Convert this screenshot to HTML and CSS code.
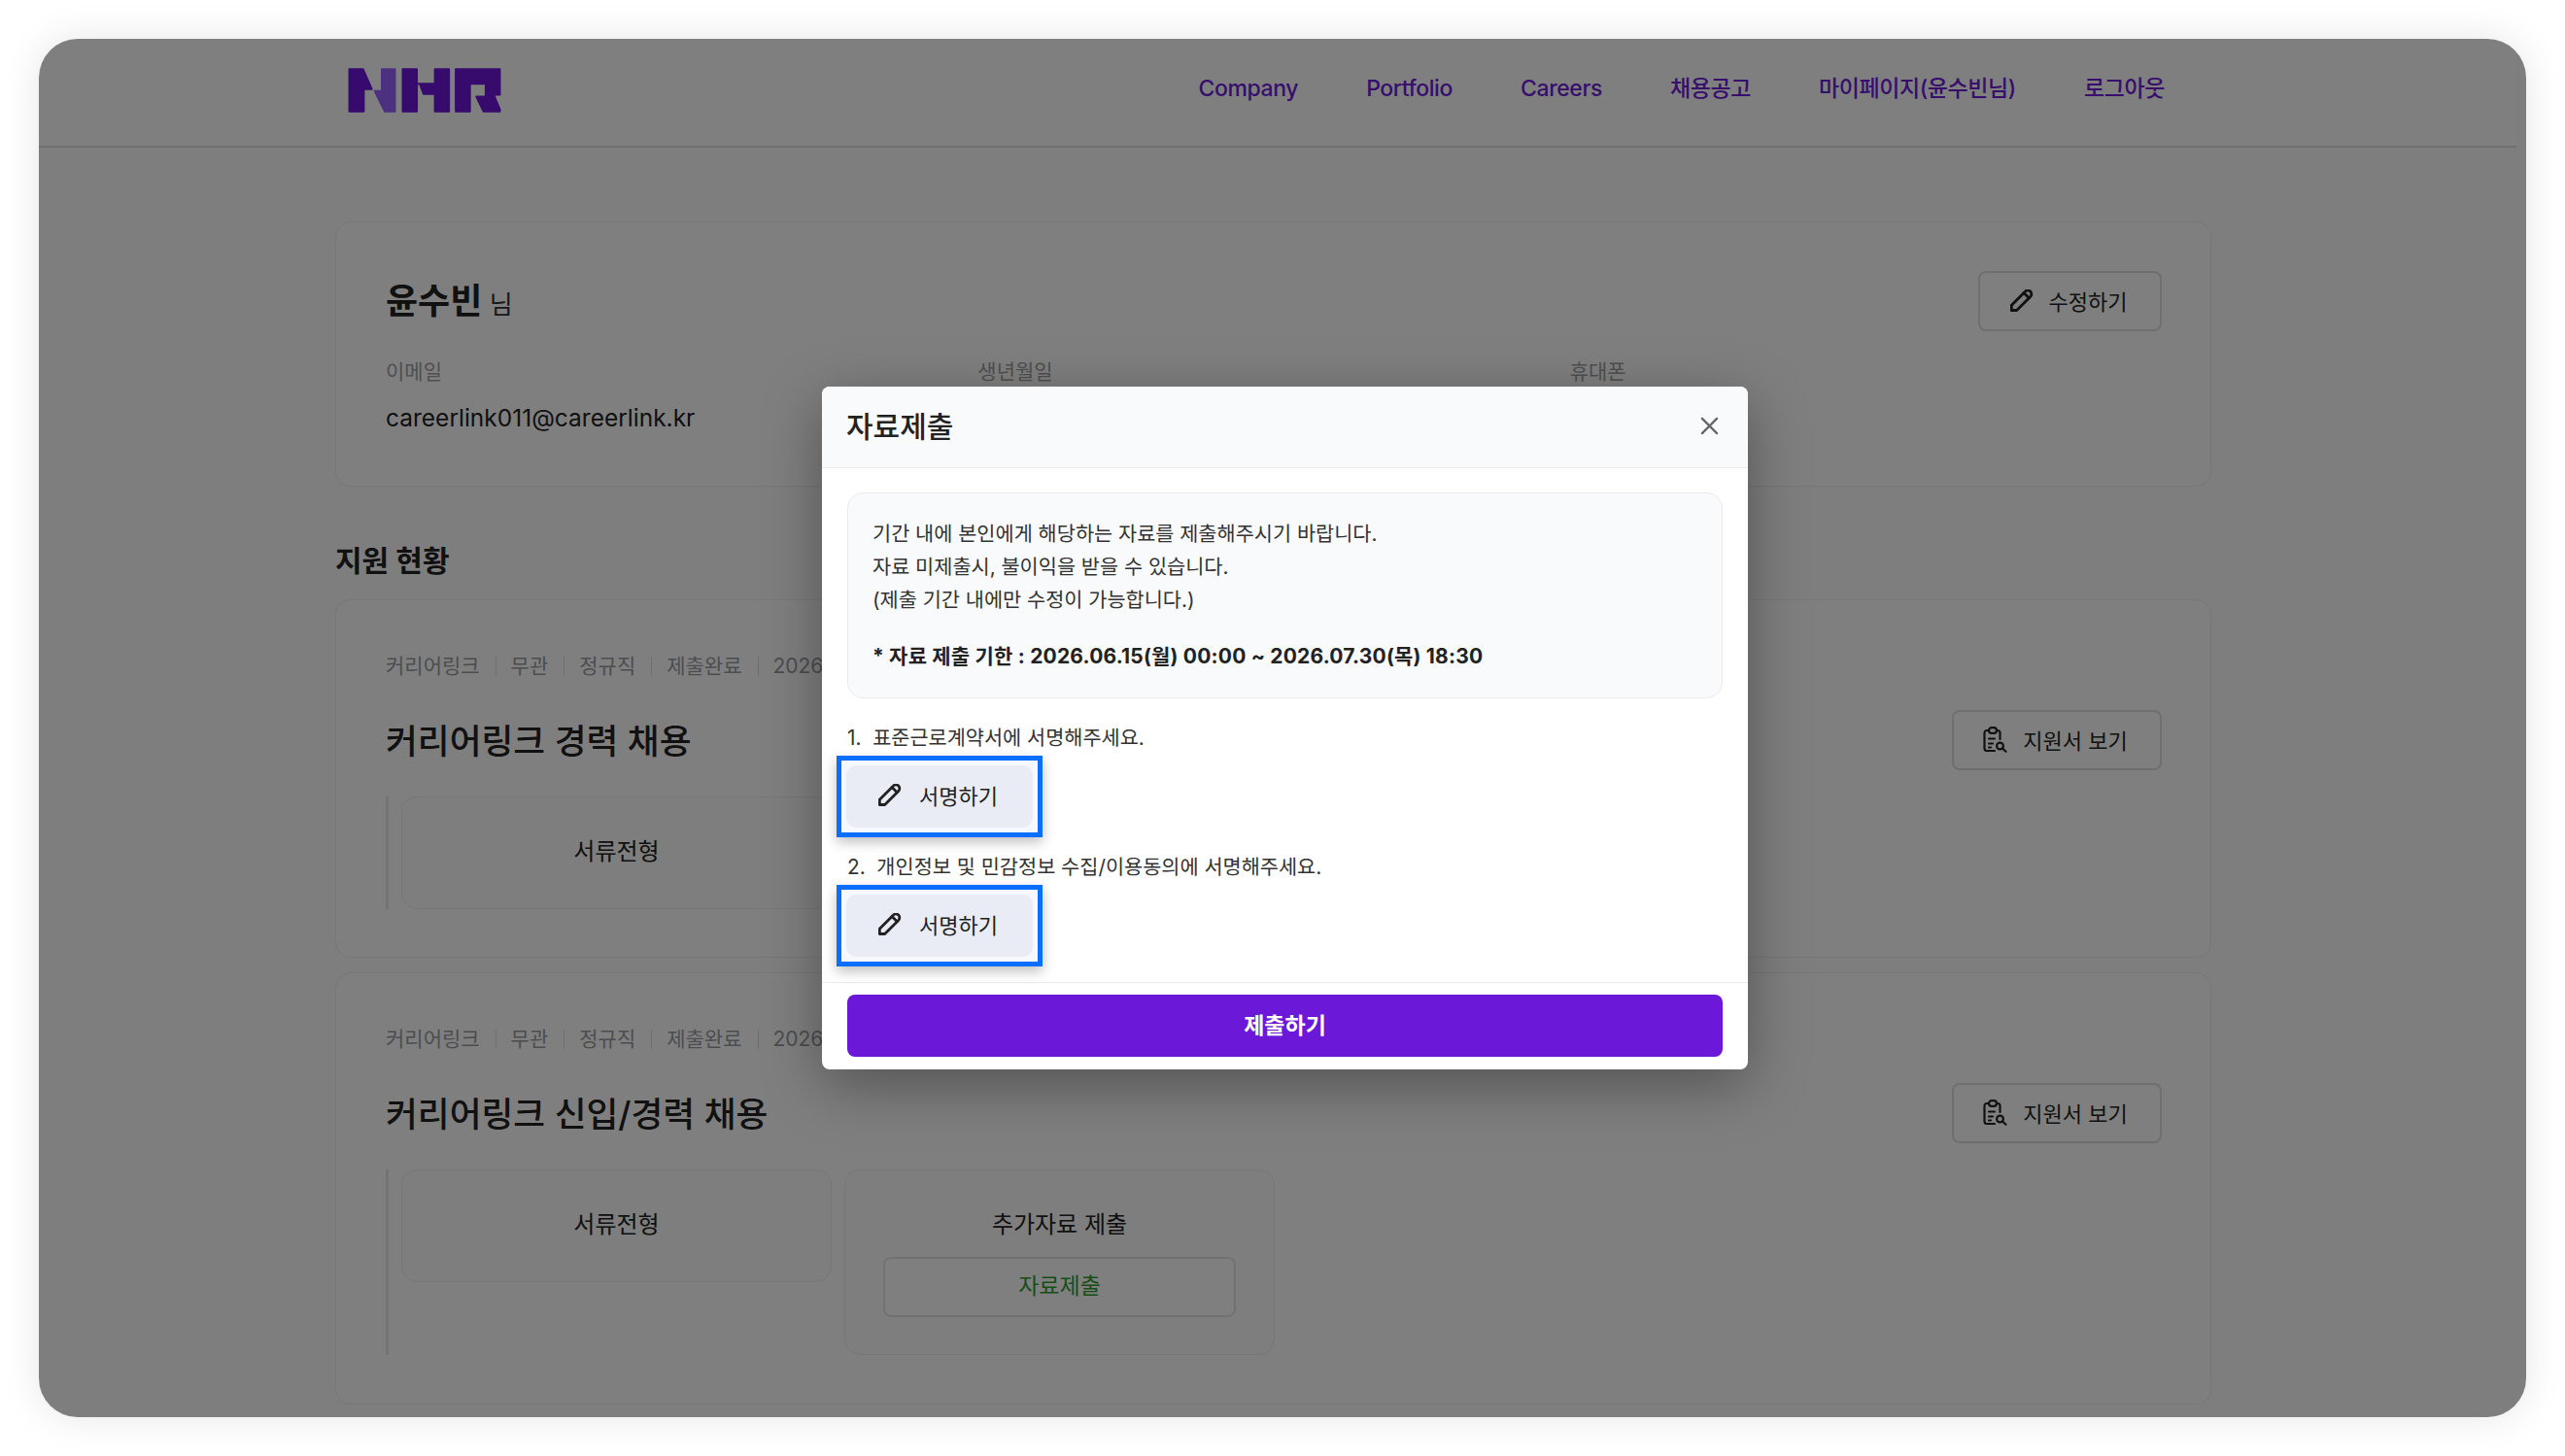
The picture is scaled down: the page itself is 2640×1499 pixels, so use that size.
FILE: index.html
```html
<!DOCTYPE html>
<html lang="ko">

<head>
    <meta charset="UTF-8">
    <meta name="viewport" content="width=device-width, initial-scale=1.0">
    <title>자료제출</title>
    <link rel="stylesheet" href="styles.css">
</head>

<body>
    <div class="frame">
        <!-- HEADER -->
        <header class="header">
            <svg class="logo" viewBox="50 56 482 145" aria-label="NHR">
                <path class="logo-dark" d="M57 63H100L127 125H102V194H57Z" />
                <path class="logo-light" d="M158 63H199V194H167L136 131H158Z" />
                <path class="logo-dark" d="M223 63H267V108H323V63H367V194H323V140H288L276 108H267V194H223Z" />
                <path class="logo-dark" d="M388 63H525V142H506L525 188V194H474L452 148H481V108H432V194H388Z" />
            </svg>
            <nav class="nav">
                <a>Company</a>
                <a>Portfolio</a>
                <a>Careers</a>
                <a>채용공고</a>
                <a>마이페이지(윤수빈님)</a>
                <a>로그아웃</a>
            </nav>
        </header>

        <main class="main">
            <!-- 내 정보 -->
            <section class="card profile">
                <div class="profile-head">
                    <div class="name"><strong>윤수빈</strong> <span>님</span></div>
                    <button class="btn">
                        <svg class="icon-pen"><use href="#pen" /></svg>
                        수정하기
                    </button>
                </div>
                <div class="profile-info">
                    <div>
                        <p class="label">이메일</p>
                        <p class="value">careerlink011@careerlink.kr</p>
                    </div>
                    <div>
                        <p class="label">생년월일</p>
                    </div>
                    <div>
                        <p class="label">휴대폰</p>
                    </div>
                </div>
            </section>

            <!-- 지원 현황 -->
            <h2 class="section-title">지원 현황</h2>

            <section class="card apply">
                <div class="meta">
                    <span>커리어링크</span><span>무관</span><span>정규직</span><span>제출완료</span><span>2026</span>
                </div>
                <div class="apply-head">
                    <h3>커리어링크 경력 채용</h3>
                    <button class="btn btn-view">
                        <svg class="icon-doc"><use href="#doc" /></svg>
                        지원서 보기
                    </button>
                </div>
                <div class="steps">
                    <div class="step">서류전형</div>
                </div>
            </section>

            <section class="card apply apply-last">
                <div class="meta">
                    <span>커리어링크</span><span>무관</span><span>정규직</span><span>제출완료</span><span>2026</span>
                </div>
                <div class="apply-head">
                    <h3>커리어링크 신입/경력 채용</h3>
                    <button class="btn btn-view">
                        <svg class="icon-doc"><use href="#doc" /></svg>
                        지원서 보기
                    </button>
                </div>
                <div class="steps">
                    <div class="step">서류전형</div>
                    <div class="step">
                        추가자료 제출
                        <button class="btn-upload">자료제출</button>
                    </div>
                </div>
            </section>
        </main>

        <!-- MODAL -->
        <div class="overlay">
            <div class="modal">
                <div class="modal-head">
                    <h4>자료제출</h4>
                    <svg class="icon-close" viewBox="0 0 20 20">
                        <path d="M2 2L18 18M18 2L2 18" />
                    </svg>
                </div>
                <div class="modal-body">
                    <div class="notice">
                        <p>기간 내에 본인에게 해당하는 자료를 제출해주시기 바랍니다.</p>
                        <p>자료 미제출시, 불이익을 받을 수 있습니다.</p>
                        <p>(제출 기간 내에만 수정이 가능합니다.)</p>
                        <p class="deadline">* 자료 제출 기한 : 2026.06.15(월) 00:00 ~ 2026.07.30(목) 18:30</p>
                    </div>
                    <p class="sign-text">1.&nbsp; 표준근로계약서에 서명해주세요.</p>
                    <div class="sign-ring">
                        <button class="btn-sign">
                            <svg class="icon-pen"><use href="#pen" /></svg>
                            서명하기
                        </button>
                    </div>
                    <p class="sign-text">2.&nbsp; 개인정보 및 민감정보 수집/이용동의에 서명해주세요.</p>
                    <div class="sign-ring">
                        <button class="btn-sign">
                            <svg class="icon-pen"><use href="#pen" /></svg>
                            서명하기
                        </button>
                    </div>
                </div>
                <div class="modal-foot">
                    <button class="btn-submit">제출하기</button>
                </div>
            </div>
        </div>
    </div>

    <!-- 아이콘 -->
    <svg class="sprite">
        <symbol id="pen" viewBox="3 4 18 17">
            <path d="M4 20h4L18.5 9.5a2.83 2.83 0 1 0-4-4L4 16v4" />
            <path d="M13.5 6.5l4 4" />
        </symbol>
        <symbol id="doc" viewBox="0 0 25 27">
            <path d="M6 4H4a2.5 2.5 0 0 0-2.5 2.5v16A2.5 2.5 0 0 0 4 25h8" />
            <path d="M14 4h1a2.5 2.5 0 0 1 2.5 2.5V13" />
            <rect x="6" y="1.2" width="8" height="5.6" rx="2.8" />
            <path d="M6 12.5h6M6 17.5h4M6 21.5h2" />
            <circle cx="17.5" cy="20" r="3.4" />
            <path d="M20 22.5l3.5 3.3" />
        </symbol>
    </svg>
</body>

</html>
```

FILE: styles.css
```css
* {
    box-sizing: border-box;
}

html,
body {
    margin: 0;
    height: 100%;
    background: #fff;
}

body {
    padding: 40px;
    font-family: Inter, "Noto Sans CJK KR", sans-serif;
    color: #222;
}

p,
h2,
h3,
h4 {
    margin: 0;
    font-weight: 400;
}

button {
    font-family: inherit;
}

.sprite {
    display: none;
}

.frame {
    position: relative;
    height: 1419px;
    overflow: hidden;
    border-radius: 40px;
    background: #fafcfa;
    box-shadow: 0 0 40px rgba(0, 0, 0, 0.1);
}

/* header */
.header {
    display: flex;
    align-items: center;
    height: 112px;
    margin-right: 10px;
    padding: 0 362px 0 318px;
    background: #fff;
    border-bottom: 2px solid #e2e2e2;
}

.logo {
    width: 160px;
    height: 48px;
    margin-top: -4px;
    margin-left: -1px;
}

.logo-dark,
.logo-light {
    stroke-width: 6px;
    stroke-linejoin: round;
}

.logo-dark {
    fill: #6e14dc;
    stroke: #6e14dc;
}

.logo-light {
    fill: #9662fe;
    stroke: #9662fe;
}

.nav {
    display: flex;
    gap: 70px;
    margin-left: auto;
    margin-top: -8px;
    font-size: 23px;
    line-height: 36px;
    font-weight: 500;
    letter-spacing: -0.4px;
    color: #6e1cd8;
}

/* main */
.main {
    width: 1931px;
    margin-left: 305px;
    padding-top: 76px;
}

.card {
    background: #fff;
    border: 1px solid #eceef0;
    border-radius: 16px;
    padding: 50px 50px 50px 51px;
}

.btn {
    display: flex;
    align-items: center;
    justify-content: center;
    gap: 16px;
    width: 189px;
    height: 62px;
    padding: 0 3px 2px 0;
    font-size: 22px;
    color: #222;
    background: #fff;
    border: 2px solid #dfdfdf;
    border-radius: 8px;
}

.btn-view {
    width: 216px;
}

.icon-pen {
    width: 24px;
    height: 23px;
    fill: none;
    stroke: currentColor;
    stroke-width: 2.1;
    stroke-linecap: round;
    stroke-linejoin: round;
}

.icon-doc {
    width: 25px;
    height: 27px;
    fill: none;
    stroke: currentColor;
    stroke-width: 2.2;
    stroke-linecap: round;
    stroke-linejoin: round;
}

/* profile */
.profile {
    height: 273px;
}

.profile-head {
    display: flex;
    align-items: center;
    justify-content: space-between;
    height: 62px;
}

.name {
    margin-top: -6px;
    font-size: 26px;
    color: #333;
}

.name strong {
    font-size: 36px;
    font-weight: 700;
    color: #222;
}

.profile-info {
    display: flex;
    margin-top: 27px;
}

.profile-info div {
    width: 610px;
}

.label {
    font-size: 21px;
    line-height: 30px;
    color: #a0a0a0;
}

.value {
    margin-top: 15px;
    font-size: 24.5px;
    line-height: 34px;
    color: #222;
}

.section-title {
    height: 40px;
    margin: 56px 0 20px;
    font-size: 30px;
    line-height: 40px;
    font-weight: 700;
}

/* apply cards */
.apply {
    height: 369px;
}

.apply-last {
    height: 445px;
    margin-top: 15px;
}

.meta {
    display: flex;
    align-items: center;
    height: 36px;
    font-size: 21px;
    line-height: 20px;
    color: #999ba0;
}

.meta span + span {
    margin-left: 16px;
    padding-left: 15px;
    border-left: 1px solid #dfdfe2;
}

.apply-head {
    display: flex;
    align-items: center;
    justify-content: space-between;
    height: 62px;
    margin: 27px 0;
}

.apply-head h3 {
    margin-top: -3px;
    font-size: 35.7px;
    font-weight: 500;
    color: #222;
}

.steps {
    display: flex;
    align-items: flex-start;
    gap: 13px;
    padding-left: 13px;
    border-left: 3px solid #e4e6ea;
}

.step {
    width: 443px;
    min-height: 116px;
    padding: 36px 39px 38px;
    font-size: 24px;
    line-height: 40px;
    text-align: center;
    color: #222;
    background: #fafcfa;
    border: 1px solid #eceef0;
    border-radius: 16px;
}

.btn-upload {
    display: block;
    width: 100%;
    height: 62px;
    margin-top: 13px;
    padding: 0 0 6px;
    font-size: 23px;
    color: #2f9b2f;
    background: #fff;
    border: 2px solid #e4e4e4;
    border-radius: 8px;
}

/* modal */
.overlay {
    position: absolute;
    inset: 0;
    display: flex;
    align-items: flex-start;
    padding: 358px 0 0 806px;
    background: rgba(0, 0, 0, 0.5);
}

.modal {
    width: 953px;
    background: #fff;
    border-radius: 8px;
    box-shadow: 0 16px 60px rgba(0, 0, 0, 0.35);
}

.modal-head {
    display: flex;
    align-items: center;
    justify-content: space-between;
    height: 84px;
    padding: 0 30px 2px 25px;
    background: #f9fafc;
    border-bottom: 1px solid #e9ebef;
    border-radius: 8px 8px 0 0;
}

.modal-head h4 {
    margin-top: -4px;
    font-size: 30px;
    font-weight: 500;
    color: #222;
}

.icon-close {
    width: 19px;
    height: 19px;
    fill: none;
    stroke: #666;
    stroke-width: 2.4;
    stroke-linecap: round;
}

.modal-body {
    padding: 25px 26px 26px;
    border-bottom: 1px solid #e9ebef;
}

.notice {
    padding: 25px;
    font-size: 20.8px;
    line-height: 34px;
    color: #333;
    background: #f9fafc;
    border: 1px solid #e9ebef;
    border-radius: 16px;
}

.deadline {
    margin-top: 24px;
    font-size: 21px;
    font-weight: 700;
    letter-spacing: 0.2px;
    color: #222;
}

.sign-text {
    margin-top: 24px;
    font-size: 20.8px;
    line-height: 34px;
    color: #333;
}

/* 서명 버튼 포커스 링 */
.sign-ring {
    width: 212px;
    margin: 1px 0 -10px -11px;
    padding: 5px;
    background: #f5f8ff;
    border: 5px solid #0a6eff;
    box-shadow: 0 5px 12px rgba(0, 0, 0, 0.25);
}

.btn-sign {
    display: flex;
    align-items: center;
    justify-content: center;
    gap: 18px;
    width: 100%;
    height: 64px;
    padding: 0 3px 4px 0;
    font-size: 22px;
    color: #222;
    background: #e9ecf5;
    border: 0;
    border-radius: 10px;
}

.modal-foot {
    padding: 12px 26px 13px;
}

.btn-submit {
    display: block;
    width: 100%;
    height: 64px;
    padding: 0 0 4px;
    font-size: 23px;
    font-weight: 700;
    color: #fff;
    background: #6c18d8;
    border: 0;
    border-radius: 8px;
}
```
